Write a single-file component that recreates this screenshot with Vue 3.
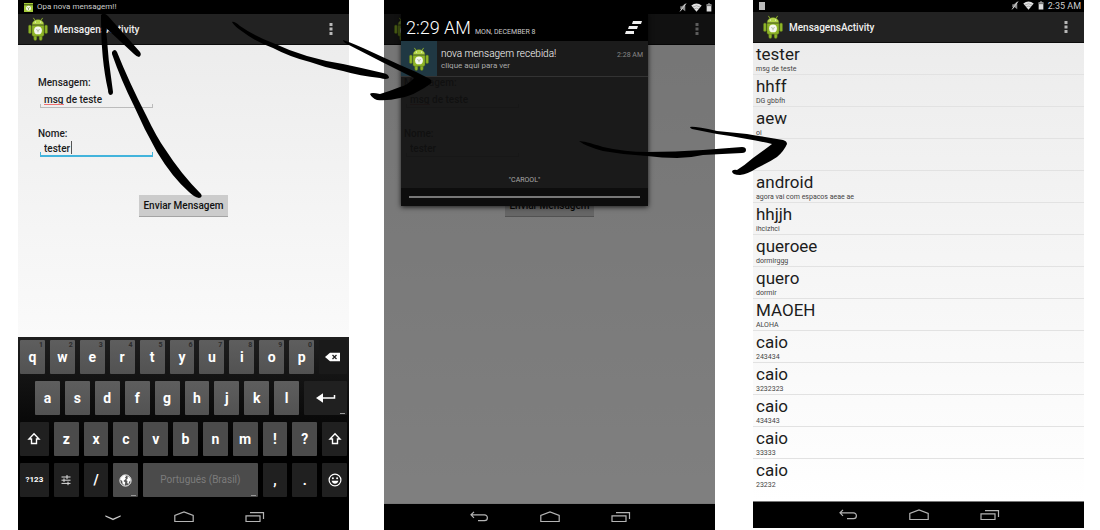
<script setup>
const screens = [
  { id: 'compose', shade: false },
  { id: 'alert', shade: true },
]

const messages = [
  { name: 'tester', text: 'msg de teste' },
  { name: 'hhff', text: 'DG gbbfh' },
  { name: 'aew', text: 'oi' },
  { name: '', text: '' },
  { name: 'android', text: 'agora vai com espacos aeae ae' },
  { name: 'hhjjh', text: 'ihcizhci' },
  { name: 'queroee', text: 'dormirggg' },
  { name: 'quero', text: 'dormir' },
  { name: 'MAOEH', text: 'ALOHA' },
  { name: 'caio', text: '243434' },
  { name: 'caio', text: '3232323' },
  { name: 'caio', text: '434343' },
  { name: 'caio', text: '33333' },
  { name: 'caio', text: '23232' },
]

const topKeys = [...'qwertyuiop'].map((letter, i) => ({ letter, hint: String((i + 1) % 10) }))
const middleKeys = [...'asdfghjkl']
const bottomKeys = [...'zxcvbnm!?']
</script>

<template>
  <main class="stage">
    <svg class="symbols" aria-hidden="true">
      <symbol id="robot" viewBox="0 0 20 24">
        <g stroke="#56701a" stroke-width=".5" fill="#8fb528">
          <path d="M5.6 1.2 7 3.6M14.4 1.2 13 3.6" stroke="#97bd2c" stroke-width=".9" stroke-linecap="round" />
          <rect x=".5" y="8" width="2.8" height="8.6" rx="1.4" />
          <rect x="16.7" y="8" width="2.8" height="8.6" rx="1.4" />
          <rect x="5.8" y="18" width="3" height="5.5" rx="1.4" />
          <rect x="11.2" y="18" width="3" height="5.5" rx="1.4" />
          <path d="M4 7.8a6 5.4 0 0 1 12 0z" fill="#b4d54a" />
          <path d="M4 8.2h12v9.6q0 1.4-1.4 1.4H5.4Q4 19.2 4 17.8z" />
        </g>
        <circle cx="7.4" cy="5" r=".6" fill="#fff" />
        <circle cx="12.6" cy="5" r=".6" fill="#fff" />
        <circle cx="10" cy="13.4" r="3.9" fill="#f6f8f0" />
        <path d="m8.200 12.500 1.800.9 1.800-.9M10 13.400v1.900" stroke="#9aa585" stroke-width=".7" fill="none" />
      </symbol>
      <symbol id="dots" viewBox="0 0 4 12">
        <path d="M.5 0h3v3h-3zM.5 4.500h3v3h-3zM.5 9h3v3h-3z" fill="#b8b8b8" />
      </symbol>
      <symbol id="nav-down" viewBox="0 0 20 12">
        <path d="M2.500 4.500 10 7.800l7.500-3.300v1L10 9 2.500 5.500z" fill="#ddd" stroke="#ddd" stroke-width=".2" />
      </symbol>
      <symbol id="nav-back" viewBox="0 0 20 12">
        <path d="M5 .8 2 3.800l3 3M2 3.800H15.500a2.900 2.900 0 0 1 0 5.800H9" fill="none" stroke="#b4b4b4" stroke-width="1.200" />
      </symbol>
      <symbol id="nav-home" viewBox="0 0 20 12">
        <path d="M.8 10.500V4.500L10 1l9.200 3.500v6z" fill="none" stroke="#b4b4b4" stroke-width="1.200" />
      </symbol>
      <symbol id="nav-recent" viewBox="0 0 20 12">
        <path d="M1 4.800h14v5.700H1zM5 1.700h13.500V8" fill="none" stroke="#b4b4b4" stroke-width="1.200" />
      </symbol>
      <symbol id="mute" viewBox="0 0 8 10">
        <path d="M1 3.500h1.800L6.500.5v8.700L3.500 7H1z" fill="#8c8c8c" />
        <path d="M.8 9.300 7.300.6" stroke="#d0d0d0" stroke-width="1.100" />
      </symbol>
      <symbol id="wifi" viewBox="0 0 11 9">
        <path d="M.3 2.600Q5.500-1.600 10.700 2.600L5.500 8.800z" fill="#e2e2e2" />
        <path d="M1.800 4.100q3.700-2.800 7.400 0M3.200 5.900q2.300-1.600 4.600 0" fill="none" stroke="#777" stroke-width=".5" />
      </symbol>
      <symbol id="battery" viewBox="0 0 6 10">
        <path d="M2 .5h2v1h1.600V9.500H.4v-8H2z" fill="#ddd" />
        <path d="M.4 1.500h5.200v2H.4z" fill="#777" />
      </symbol>
      <symbol id="shift" viewBox="0 0 14 14">
        <path d="M7 1.800 12 7H9.500v4.500h-5V7H2z" fill="none" stroke="#fff" stroke-width="1.400" />
      </symbol>
    </svg>

    <section v-for="screen in screens" :key="screen.id" class="phone">
      <header class="status">
        <template v-if="!screen.shade">
          <svg class="status-app" viewBox="0 0 9 9">
            <rect width="9" height="9" fill="#a4cb3a" />
            <path d="M0 1.800h9" stroke="#3d5210" />
            <circle cx="4.500" cy="5.300" r="2.500" fill="#f4f8e8" />
            <path d="m3.300 4.500 1.200.8 1.200-.8M4.500 5.300v1.600" stroke="#70942a" stroke-width=".7" fill="none" />
          </svg>
          <span class="ticker">Opa nova mensagem!!</span>
        </template>
        <div v-else class="status-icons">
          <svg class="mute"><use href="#mute" /></svg>
          <svg class="wifi"><use href="#wifi" /></svg>
          <svg class="battery"><use href="#battery" /></svg>
        </div>
      </header>

      <div class="app">
        <div class="bar">
          <svg class="robot"><use href="#robot" /></svg>
          <h1 v-if="!screen.shade">MensagensActivity</h1>
          <button class="menu" aria-label="Menu"><svg><use href="#dots" /></svg></button>
        </div>
        <form class="form" @submit.prevent>
          <label :for="screen.id + '-msg'">Mensagem:</label>
          <div class="field">
            <input :id="screen.id + '-msg'" type="text" value="msg de teste" spellcheck="false" />
            <span class="typo"></span>
          </div>
          <label class="second" :for="screen.id + '-name'">Nome:</label>
          <div class="field" :class="{ active: !screen.shade }">
            <input :id="screen.id + '-name'" type="text" value="tester" spellcheck="false" />
            <span v-if="!screen.shade" class="caret"></span>
          </div>
          <button class="send" type="submit">Enviar Mensagem</button>
        </form>
        <div v-if="screen.shade" class="dim"></div>
      </div>

      <div v-if="!screen.shade" class="keyboard">
        <div class="keys">
          <button v-for="key in topKeys" :key="key.letter" class="key">
            {{ key.letter }}<small>{{ key.hint }}</small>
          </button>
          <button class="key dark erase" aria-label="Apagar">
            <svg viewBox="0 0 16 10" width="16" height="10">
              <path d="M0 5 5 .8h10v8.400H5z" fill="#fff" />
              <path d="m7.500 3 4 4m0-4-4 4" stroke="#222" stroke-width="1.300" />
            </svg>
          </button>
        </div>
        <div class="keys inset">
          <button v-for="key in middleKeys" :key="key" class="key">{{ key }}</button>
          <button class="key dark enter more" aria-label="Enter">
            <svg viewBox="0 0 20 12" width="20" height="12">
              <path d="M0 6 7 1.200v9.600z" fill="#fff" />
              <path d="M6 6h12.500V3" fill="none" stroke="#fff" stroke-width="1.500" />
            </svg>
          </button>
        </div>
        <div class="keys">
          <button class="key dark wide" aria-label="Shift"><svg width="14" height="14"><use href="#shift" /></svg></button>
          <button v-for="key in bottomKeys" :key="key" class="key">{{ key }}</button>
          <button class="key dark" aria-label="Shift"><svg width="14" height="14"><use href="#shift" /></svg></button>
        </div>
        <div class="keys">
          <button class="key dark wide symbols-key">?123</button>
          <button class="key dark" aria-label="Opções">
            <svg viewBox="0 0 12 12" width="12" height="12">
              <path d="M1.500 3h9M1.500 6.200h9M1.500 9.400h9M7 1v4M4 4.400v3.600M8 7.600v3.600" stroke="#ddd" fill="none" />
            </svg>
          </button>
          <button class="key dark">/</button>
          <button class="key more" aria-label="Idioma">
            <svg viewBox="0 0 13 13" width="13" height="13">
              <circle cx="6.500" cy="6.500" r="5.600" fill="#555" stroke="#fff" />
              <path d="M2 3.500 5 1l2.500.8L6 3.500l1 1.200L4.500 7l1.800 1.500L5.500 11.500 3.500 9.500 3.200 7 1.200 5.500zM8.500 2l2.500 2 .8 2.500-1.600 1L9.500 10 8.200 9l.3-2L7.200 6l1.500-1.500z" fill="#fff" />
            </svg>
          </button>
          <button class="key space more">Português (Brasil)</button>
          <button class="key dark">,</button>
          <button class="key dark">.</button>
          <button class="key dark" aria-label="Emoji">
            <svg viewBox="0 0 14 14" width="14" height="14">
              <circle cx="7" cy="7" r="5.900" fill="none" stroke="#fff" stroke-width="1.200" />
              <circle cx="4.900" cy="5.300" r="1" fill="#fff" />
              <circle cx="9.100" cy="5.300" r="1" fill="#fff" />
              <path d="M3.600 7.800h6.800q-.8 3-3.400 3t-3.400-3z" fill="#fff" />
            </svg>
          </button>
        </div>
      </div>

      <nav class="nav" :class="{ lined: screen.shade }">
        <button :aria-label="screen.shade ? 'Voltar' : 'Fechar teclado'">
          <svg><use :href="screen.shade ? '#nav-back' : '#nav-down'" /></svg>
        </button>
        <button aria-label="Início"><svg><use href="#nav-home" /></svg></button>
        <button aria-label="Recentes"><svg><use href="#nav-recent" /></svg></button>
      </nav>

      <aside v-if="screen.shade" class="shade">
        <div class="shade-head">
          <time class="clock">2:29 AM</time>
          <span class="date">MON, DECEMBER 8</span>
          <button class="clear" aria-label="Limpar">
            <svg viewBox="0 0 17 13" width="17" height="13">
              <path d="M8 0h9l-1 3H7zM4 5h9l-1 3H3zM1 10h8v3H0z" fill="#eee" />
            </svg>
          </button>
        </div>
        <article class="notice">
          <div class="notice-icon"><svg class="robot"><use href="#robot" /></svg></div>
          <div class="notice-text">
            <h2>nova mensagem recebida!</h2>
            <p>clique aqui para ver</p>
          </div>
          <time>2:28 AM</time>
        </article>
        <div class="shade-body">"CAROOL"</div>
        <div class="shade-foot"><span></span></div>
      </aside>
    </section>

    <section class="phone inbox">
      <header class="status">
        <span class="status-note"></span>
        <div class="status-icons">
          <svg class="mute"><use href="#mute" /></svg>
          <svg class="wifi"><use href="#wifi" /></svg>
          <svg class="battery"><use href="#battery" /></svg>
          <time>2:35 AM</time>
        </div>
      </header>
      <div class="app">
        <div class="bar">
          <svg class="robot"><use href="#robot" /></svg>
          <h1>MensagensActivity</h1>
          <button class="menu" aria-label="Menu"><svg><use href="#dots" /></svg></button>
        </div>
        <ul class="list">
          <li v-for="(message, i) in messages" :key="i">
            <strong>{{ message.name }}</strong>
            <span>{{ message.text }}</span>
          </li>
        </ul>
      </div>
      <nav class="nav lined">
        <button aria-label="Voltar"><svg><use href="#nav-back" /></svg></button>
        <button aria-label="Início"><svg><use href="#nav-home" /></svg></button>
        <button aria-label="Recentes"><svg><use href="#nav-recent" /></svg></button>
      </nav>
    </section>

    <svg class="arrows" viewBox="0 0 1100 530" aria-hidden="true">
      <path d="M101 15Q104 12 108 16L140 52Q142 55 139 57Q137 57 134 54L106 28Q108 60 113 92Q113 95 110 95Q108 94 108 90Q101 60 101 17Z" />
      <path d="M112 52Q115 48 117 52Q129 82 146 115Q157 138 165 149Q181 174 201 194Q203 197 199 198Q194 197 189 192Q172 177 157 152Q144 129 134 106Q121 80 112 54Z" />
      <path d="M232 22Q234 21 240 26Q256 37 273 43Q290 51 307 56Q324 61 343 64Q362 68 383 73Q389 74 389 78Q386 80 380 78Q360 76 343 71Q326 68 310 62Q290 57 273 48Q256 42 243 32Q234 26 232 22Z" />
      <path d="M343 40Q347 41 363 48L400 65Q415 71 430 79Q433 82 430 84Q425 88 417 92Q410 96 400 98Q388 101 377 100Q372 98 370 94Q371 92 380 94Q390 91 400 87Q408 85 414 78Q398 70 382 62L347 44Q343 42 343 40Z" />
      <path d="M579 141Q584 141 603 147Q625 152 647 152Q675 152 703 150L742 147Q746 147 746 150Q746 153 742 153Q722 154 703 155Q690 158 677 158Q662 158 647 156Q625 155 603 151Q585 146 579 141Z" />
      <path d="M690 127Q694 126 717 131L747 134Q765 137 783 140Q787 141 787 144Q784 151 777 157Q768 163 757 168Q748 174 740 175Q732 175 732 171Q734 169 737 170Q745 165 753 158Q763 151 772 144Q760 141 747 139Q732 136 717 134L692 129Q690 128 690 127Z" />
    </svg>
  </main>
</template>

<style>
body {
  background: #fff;
}
</style>

<style scoped>
.stage,
.stage * {
  box-sizing: border-box;
}
.stage {
  position: relative;
  display: grid;
  grid-template-columns: 331fr 35fr 331fr 38fr 331fr;
  min-height: 100vh;
  padding: 0 16px 0 18px;
  font-family: Roboto, "Liberation Sans", sans-serif;
  color: #1c1c1c;
}
.symbols {
  position: absolute;
  width: 0;
  height: 0;
}
.arrows {
  position: absolute;
  top: 0;
  left: 0;
  width: 100%;
  pointer-events: none;
}
button {
  border: 0;
  padding: 0;
  margin: 0;
  background: none;
  color: inherit;
  font-family: inherit;
}
svg {
  display: block;
}
h1, h2, p, ul {
  margin: 0;
  padding: 0;
}
.phone {
  position: relative;
  display: flex;
  flex-direction: column;
  grid-row: 1;
  grid-column: 1;
}
.phone:nth-of-type(2) {
  grid-column: 3;
}
.phone.inbox {
  grid-column: 5;
  margin-bottom: 2px;
}
.status {
  display: flex;
  align-items: center;
  height: 14px;
  padding: 0 3px 0 6px;
  background: #000;
  color: #ccc;
}
.inbox .status {
  height: 12px;
  padding-bottom: 1px;
}
.status-app {
  width: 9px;
  height: 9px;
}
.ticker {
  margin-left: 4px;
  font-size: 8px;
  line-height: 12px;
}
.status-note {
  width: 6px;
  height: 8px;
  background: #bbb;
}
.status-icons {
  display: flex;
  align-items: center;
  gap: 4px;
  margin-left: auto;
}
.status-icons time {
  font-size: 9px;
  line-height: 10px;
}
.mute {
  width: 8px;
  height: 9px;
}
.wifi {
  width: 11px;
  height: 9px;
}
.battery {
  width: 6px;
  height: 9px;
}
.app {
  position: relative;
  flex: 1;
  display: flex;
  flex-direction: column;
  background: linear-gradient(#ebebeb, #fafafa);
}
.phone:nth-of-type(2) .app,
.inbox .app {
  background: linear-gradient(#ebebeb, #fff);
}
.bar {
  display: flex;
  align-items: center;
  height: 31px;
  padding: 0 16px 0 10px;
  background: #222;
  border-bottom: 1px solid #0c0c0c;
  color: #f0f0f0;
}
.robot {
  width: 20px;
  height: 24px;
}
.bar h1 {
  margin-left: 6px;
  padding-top: 2px;
  font-size: 10px;
  font-weight: 500;
  line-height: 14px;
}
.menu {
  margin-left: auto;
}
.menu svg {
  width: 4px;
  height: 12px;
}
.form {
  display: flex;
  flex-direction: column;
  align-items: flex-start;
  padding: 32px 20px 0;
}
.form label {
  font-size: 10px;
  font-weight: 500;
  line-height: 12px;
}
.form .second {
  margin-top: 20px;
}
.field {
  position: relative;
  display: flex;
  width: 114px;
  height: 19px;
  margin-left: 1px;
}
.second + .field {
  height: 17px;
}
.field::after {
  content: "";
  position: absolute;
  left: 1px;
  right: 0;
  bottom: 0;
  height: 3px;
  border: 1px solid #bbb;
  border-top: 0;
}
.field.active::after {
  border-color: #43b4dc;
  border-bottom-width: 2px;
}
.field input {
  width: 100%;
  height: 16px;
  padding: 0 5px;
  border: 0;
  outline: 0;
  background: none;
  color: inherit;
  font-family: inherit;
  font-size: 10px;
  font-weight: 500;
}
label:not(.second) + .field input {
  margin-top: 2px;
}
.typo {
  position: absolute;
  left: 5px;
  top: 15px;
  width: 20px;
  height: 1px;
  background: #f07070;
}
.caret {
  position: absolute;
  left: 32px;
  top: 1px;
  width: 1px;
  height: 13px;
  background: #555;
}
.send {
  align-self: center;
  height: 22px;
  margin-top: 38px;
  padding: 0 4px;
  background: #ccc;
  border-bottom: 1px solid #a4a4a4;
  font-size: 10px;
  font-weight: 500;
  color: #111;
}
.dim {
  position: absolute;
  inset: 0;
  background: rgba(0, 0, 0, 0.5);
}
.keyboard {
  display: flex;
  flex-direction: column;
  gap: 7px;
  padding: 3px 2px 7px;
  background: linear-gradient(#1e1e1e, #000 70%);
}
.keys {
  display: flex;
  gap: 5px;
}
.keys.inset {
  padding-left: 15px;
}
.key {
  position: relative;
  flex: 25 1 0;
  min-width: 0;
  height: 34px;
  display: flex;
  align-items: center;
  justify-content: center;
  border-radius: 1px;
  background: linear-gradient(#5e5e5e, #525252);
  color: #fff;
  font-size: 14px;
  font-weight: 700;
  line-height: 16px;
}
.keys:nth-child(n + 3) .key {
  background: #4b4b4b;
}
.keys .key.dark.dark {
  background: #202020;
}
.keys:first-child .dark.dark {
  background: #1a1a1a;
}
.key.erase {
  flex-grow: 28;
}
.key.enter {
  flex-grow: 43;
}
.key.wide {
  flex-grow: 29;
}
.key.space {
  flex-grow: 115;
  color: #7c7c7c;
  font-size: 10px;
  font-weight: 400;
}
.key.symbols-key {
  font-size: 8px;
}
.key small {
  position: absolute;
  top: 1px;
  right: 2px;
  font-size: 7px;
  line-height: 8px;
  color: #2c2c2c;
}
.more::after {
  content: "";
  position: absolute;
  right: 2px;
  bottom: 1px;
  width: 5px;
  height: 1px;
  background: #999;
}
.nav {
  display: flex;
  align-items: center;
  justify-content: center;
  gap: 51px;
  height: 26px;
  background: #000;
}
.nav.lined {
  height: 27px;
  border-top: 1px solid #777;
}
.nav svg {
  width: 20px;
  height: 12px;
}
.shade {
  position: absolute;
  top: 13px;
  left: 17px;
  width: 247px;
  box-shadow: 0 1px 5px rgba(0, 0, 0, 0.8);
  color: #ccc;
}
.shade-head {
  display: flex;
  align-items: baseline;
  height: 28px;
  padding: 3px 6px 0 5px;
  background: #000;
}
.clock {
  font-size: 18px;
  font-weight: 300;
  line-height: 24px;
  color: #fff;
}
.date {
  margin-left: 4px;
  font-size: 7px;
}
.clear {
  align-self: center;
  margin: -3px 0 0 auto;
}
.notice {
  display: flex;
  height: 36px;
  background: #1b1b1b;
  border-bottom: 1px solid #333;
}
.notice-icon {
  display: flex;
  align-items: center;
  justify-content: center;
  width: 36px;
  height: 35px;
  background: #203843;
}
.notice-text {
  padding: 6px 0 0 4px;
}
.notice h2 {
  font-size: 10px;
  font-weight: 300;
  line-height: 14px;
  color: #fff;
}
.notice p {
  font-size: 8px;
  line-height: 10px;
  color: #aaa;
}
.notice time {
  margin: 10px 5px 0 auto;
  font-size: 7px;
  line-height: 9px;
  color: #888;
}
.shade-body {
  display: flex;
  align-items: flex-end;
  justify-content: center;
  height: 111px;
  padding-bottom: 3px;
  background: rgba(17, 17, 17, 0.91);
  font-size: 7px;
  line-height: 9px;
  color: #aaa;
}
.shade-foot {
  height: 18px;
  padding: 8px 8px 0;
  background: #0d0d0d;
}
.shade-foot span {
  display: block;
  height: 2px;
  background: #777;
}
.list {
  list-style: none;
}
.list li {
  height: 32px;
  padding: 1px 3px 0;
  border-bottom: 1px solid #e2e2e2;
}
.list li:last-child {
  border-bottom: 0;
}
.list strong {
  display: block;
  height: 21px;
  font-size: 17px;
  font-weight: 400;
  line-height: 21px;
}
.list span {
  display: block;
  font-size: 7px;
  line-height: 9px;
  color: #444;
}
</style>
